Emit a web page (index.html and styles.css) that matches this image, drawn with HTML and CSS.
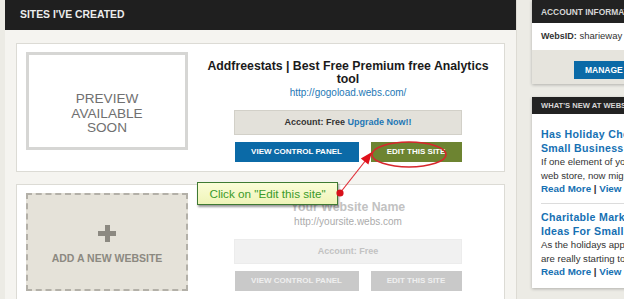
FILE: index.html
```html
<!DOCTYPE html>
<html>
<head>
<meta charset="utf-8">
<link rel="stylesheet" href="styles.css">
</head>
<body>
<div class="page">
  <div class="main">
    <div class="main-head">SITES I'VE CREATED</div>
    <div class="main-body">
      <div class="card">
        <div class="preview">PREVIEW<br>AVAILABLE<br>SOON</div>
        <div class="info">
          <div class="title">Addfreestats | Best Free Premium free Analytics tool</div>
          <div class="url">http://gogoload.webs.com/</div>
          <div class="account">Account: Free <span class="upgrade">Upgrade Now!!</span></div>
          <div class="btns">
            <div class="btn btn-blue">VIEW CONTROL PANEL</div>
            <div class="btn btn-green">EDIT THIS SITE</div>
          </div>
        </div>
      </div>
      <div class="card card-new">
        <div class="addbox">
          <div class="plus"></div>
          <div class="addtext">ADD A NEW WEBSITE</div>
        </div>
        <div class="info faded">
          <div class="title">Your Website Name</div>
          <div class="url">http://yoursite.webs.com</div>
          <div class="account">Account: Free</div>
          <div class="btns">
            <div class="btn btn-gray">VIEW CONTROL PANEL</div>
            <div class="btn btn-gray btn-small">EDIT THIS SITE</div>
          </div>
        </div>
      </div>
    </div>
  </div>
  <div class="side">
    <div class="acc">
      <div class="side-head">ACCOUNT INFORMATION</div>
      <div class="acc-id"><b>WebsID:</b> sharieway</div>
      <div class="acc-actions"><div class="manage">MANAGE</div></div>
    </div>
    <div class="news">
      <div class="side-head news-head">WHAT'S NEW AT WEBS</div>
      <div class="news-body">
        <div class="article">
          <div class="a-title">Has Holiday Cheer Come<br>Small Business Owners?</div>
          <div class="a-text">If one element of your<br>web store, now might be</div>
          <div class="a-links"><span>Read More</span> | <span>View Comments</span></div>
        </div>
        <div class="article">
          <div class="a-title">Charitable Marketing<br>Ideas For Small Business</div>
          <div class="a-text">As the holidays approach,<br>are really starting to think</div>
          <div class="a-links"><span>Read More</span> | <span>View Comments</span></div>
        </div>
      </div>
    </div>
  </div>
</div>
<div class="callout">Click on "Edit this site"</div>
<svg class="annot" width="624" height="299" viewBox="0 0 624 299">
  <ellipse cx="409" cy="154.5" rx="37" ry="12.5" fill="none" stroke="#d7262c" stroke-width="1.6"/>
  <line x1="340" y1="193" x2="366" y2="160" stroke="#e0303a" stroke-width="1.2"/>
  <polygon points="372,152 368.4,164.5 360.8,158.5" fill="#e0101a"/>
  <circle cx="340" cy="193" r="3.6" fill="#d8101a"/>
</svg>
</body>
</html>
```
FILE: styles.css
```css
* { box-sizing: border-box; }
html, body {
  margin: 0;
  padding: 0;
}
body {
  width: 624px;
  height: 299px;
  overflow: hidden;
  background: #ecebe5;
  font-family: "Liberation Sans", Arial, sans-serif;
  position: relative;
}
.page {
  display: flex;
  padding-left: 5px;
  align-items: flex-start;
}
.main {
  width: 512px;
  flex-shrink: 0;
  border-right: 1px solid #dddbd4;
  background: #f5f4f0;
  height: 320px;
}
.main-head {
  height: 30px;
  background: #1f1f1f;
  color: #ececec;
  font-weight: bold;
  font-size: 10.4px;
  line-height: 30px;
  padding-left: 15px;
}
.main-body {
  padding: 13px 11px 0 11px;
}
.card {
  display: flex;
  background: #fff;
  border: 1px solid #dcdbd5;
  padding: 8px 9px 9px 9px;
}
.card-new {
  margin-top: 12px;
}
.preview {
  width: 162px;
  height: 98px;
  flex-shrink: 0;
  border: 3px solid #d6d6d4;
  padding-top: 37px;
  text-align: center;
  color: #707070;
  font-size: 13.6px;
  line-height: 14.5px;
}
.addbox {
  width: 162px;
  height: 98px;
  flex-shrink: 0;
  background: #e5e2d9;
  border: 2px dashed #b3b0a8;
  display: flex;
  flex-direction: column;
  align-items: center;
  padding-top: 30px;
}
.plus {
  width: 18px;
  height: 17px;
  background:
    linear-gradient(#8c8981, #8c8981) center / 18px 5px no-repeat,
    linear-gradient(#8c8981, #8c8981) center / 5px 17px no-repeat;
}
.addtext {
  margin-top: 10px;
  font-weight: bold;
  font-size: 10.5px;
  color: #8c8981;
}
.info {
  flex: 1;
  margin-left: 13px;
  text-align: center;
  padding-top: 8px;
}
.title {
  font-weight: bold;
  font-size: 12.3px;
  line-height: 12.5px;
  color: #1a1a1a;
}
.url {
  margin-top: 2px;
  font-size: 10px;
  line-height: 12px;
  color: #1e77b5;
}
.account {
  width: 228px;
  height: 25px;
  margin: 11px auto 0;
  background: #e3e1da;
  border: 1px solid #d2d0c8;
  font-weight: bold;
  font-size: 9px;
  line-height: 23px;
  color: #333;
}
.upgrade { color: #1e77b5; }
.btns {
  display: flex;
  justify-content: center;
  gap: 12px;
  margin-top: 7px;
}
.btn {
  height: 20px;
  font-weight: bold;
  font-size: 8px;
  line-height: 20px;
  color: #fff;
  text-align: center;
}
.btn-blue {
  width: 124px;
  background: #0b6aa7;
}
.btn-green {
  width: 91px;
  background: #6d8431;
}
.btn-gray {
  width: 124px;
  background: #c9c9c9;
  color: #efefef;
}
.btn-small { width: 91px; }
.faded .title { color: #c2c2c2; }
.faded .url { color: #ababab; }
.faded .account {
  background: #f1f1f1;
  border-color: #ececec;
  color: #c2c2c2;
}

.side {
  margin-left: 15px;
  width: 180px;
  flex-shrink: 0;
}
.side-head {
  background: #222;
  color: #d6d6d6;
  font-weight: bold;
  font-size: 8.4px;
  height: 23px;
  line-height: 24px;
  padding-left: 9px;
}
.acc {
  background: #fff;
  box-shadow: 0 1px 3px rgba(0,0,0,0.25);
}
.acc-id {
  height: 27px;
  padding: 7px 0 0 9px;
  font-size: 9.5px;
  color: #333;
  line-height: 11px;
}
.acc-id b { font-size: 9px; }
.acc-actions {
  background: #e6e4dd;
  height: 34px;
  padding: 11px 0 0 42px;
}
.manage {
  width: 110px;
  height: 18px;
  background: #0b6aa7;
  color: #fff;
  font-weight: bold;
  font-size: 8.5px;
  line-height: 18px;
  padding-left: 11px;
}
.news {
  margin-top: 13px;
  background: #fff;
  box-shadow: 0 1px 3px rgba(0,0,0,0.25);
}
.news-head {
  height: 17px;
  line-height: 18px;
  font-size: 7.6px;
}
.news-body {
  padding: 13px 9px 10px 9px;
}
.article + .article {
  border-top: 1px solid #dcdcdc;
  margin-top: 8px;
  padding-top: 6px;
}
.a-title {
  color: #1670b3;
  font-weight: bold;
  font-size: 10.6px;
  line-height: 14px;
  letter-spacing: 0.3px;
  white-space: nowrap;
}
.a-text {
  font-size: 9.6px;
  line-height: 13.5px;
  color: #333;
  white-space: nowrap;
}
.a-links {
  font-size: 9.8px;
  line-height: 13px;
  font-weight: bold;
  color: #333;
  white-space: nowrap;
}
.a-links span { color: #1670b3; }

.callout {
  position: absolute;
  left: 197px;
  top: 182px;
  width: 141px;
  height: 23px;
  background: linear-gradient(#fbfdd8, #eff4b8);
  border: 1px solid #3f7a33;
  box-shadow: 1px 2px 2px rgba(0,0,0,0.4);
  color: #3a9a2a;
  font-size: 11.7px;
  line-height: 21px;
  text-align: center;
}
.annot {
  position: absolute;
  left: 0;
  top: 0;
  pointer-events: none;
}
```
